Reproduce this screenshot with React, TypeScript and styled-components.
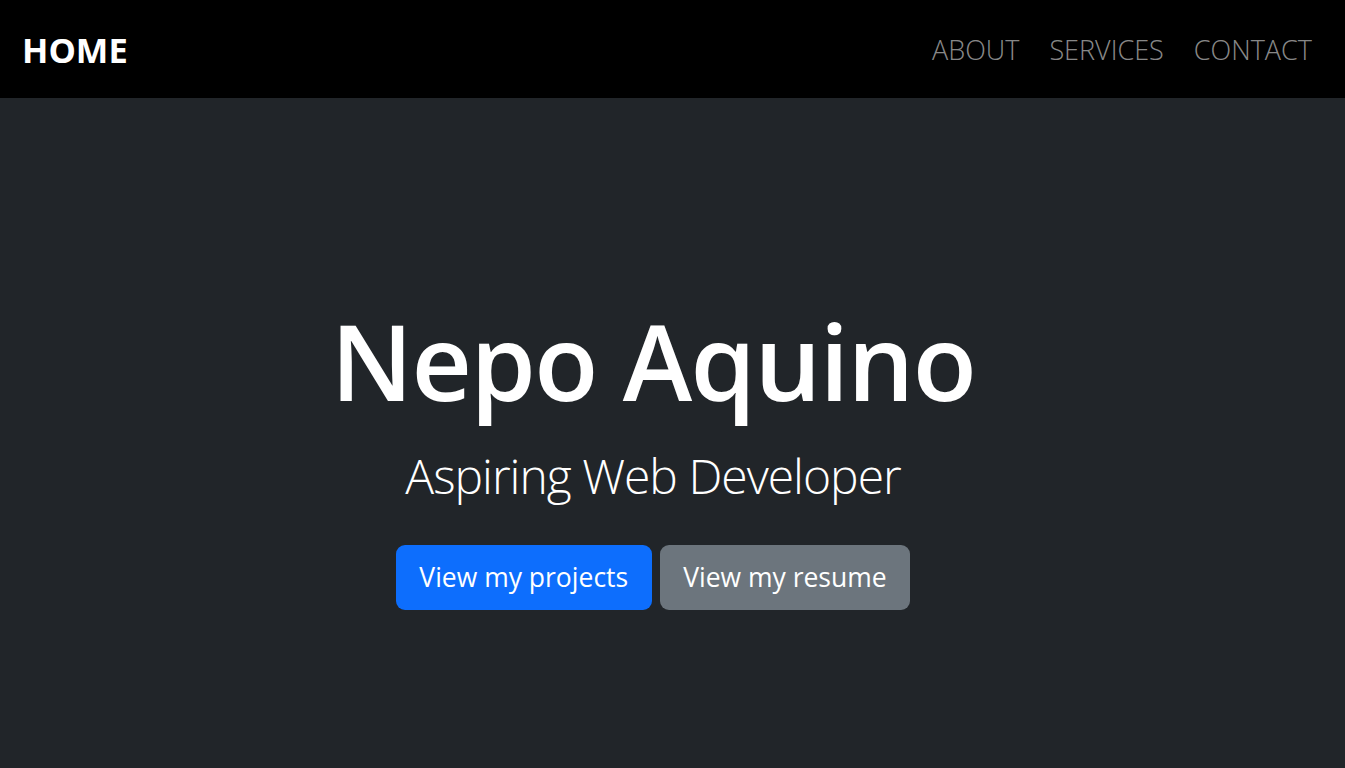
import styled, { createGlobalStyle } from "styled-components";

const GlobalStyle = createGlobalStyle`
	html, body {
		margin: 0;
		padding: 0;
		background: #212529;
		font-family: "Open Sans", "Noto Sans", "Liberation Sans", sans-serif;
	}
	* {
		box-sizing: border-box;
	}
`

const Page = styled.div`
	display: flex;
	flex-direction: column;
	min-height: 100vh;
	background: #212529;
`

const NavBar = styled.nav`
	display: flex;
	align-items: center;
	justify-content: space-between;
	height: 98px;
	padding: 0 33px 0 22px;
	background: #000;
`

const Brand = styled.a`
	color: #fff;
	font-size: 34.5px;
	font-weight: 700;
	text-decoration: none;
`

const NavLinks = styled.ul`
	display: flex;
	gap: 30px;
	margin: 0;
	padding: 0;
	list-style: none;
`

const NavLink = styled.a`
	color: rgba(255, 255, 255, 0.55);
	font-size: 27px;
	font-weight: 300;
	text-decoration: none;
`

const Hero = styled.header`
	flex: 1;
	display: flex;
	flex-direction: column;
	align-items: center;
	padding: 200px 39px 0 0;
	color: #fff;
	text-align: center;
`

const Title = styled.h1`
	margin: 0;
	font-size: 105px;
	font-weight: 600;
	line-height: 1.2;
	letter-spacing: -1.5px;
`

const Subtitle = styled.p`
	margin: 23px 0 0;
	font-size: 48px;
	font-weight: 300;
	line-height: 1.2;
	letter-spacing: -1px;
`

const Buttons = styled.div`
	display: flex;
	gap: 8px;
	margin-top: 40px;
`

const Button = styled.a<{ $variant: "primary" | "secondary" }>`
	display: flex;
	align-items: center;
	height: 65px;
	padding: 0 23.5px;
	border-radius: 9px;
	background: ${(p) => (p.$variant === "primary" ? "#0d6efd" : "#6c757d")};
	color: #fff;
	font-size: 26.5px;
	font-weight: 400;
	text-decoration: none;
`

export default function App() {
	return (
		<>
			<GlobalStyle />
			<Page>
				<NavBar>
					<Brand href="#">HOME</Brand>
					<NavLinks>
						<li><NavLink href="#">ABOUT</NavLink></li>
						<li><NavLink href="#">SERVICES</NavLink></li>
						<li><NavLink href="#">CONTACT</NavLink></li>
					</NavLinks>
				</NavBar>
				<Hero>
					<Title>Nepo Aquino</Title>
					<Subtitle>Aspiring Web Developer</Subtitle>
					<Buttons>
						<Button $variant="primary" href="#">View my projects</Button>
						<Button $variant="secondary" href="#">View my resume</Button>
					</Buttons>
				</Hero>
			</Page>
		</>
	);
}
